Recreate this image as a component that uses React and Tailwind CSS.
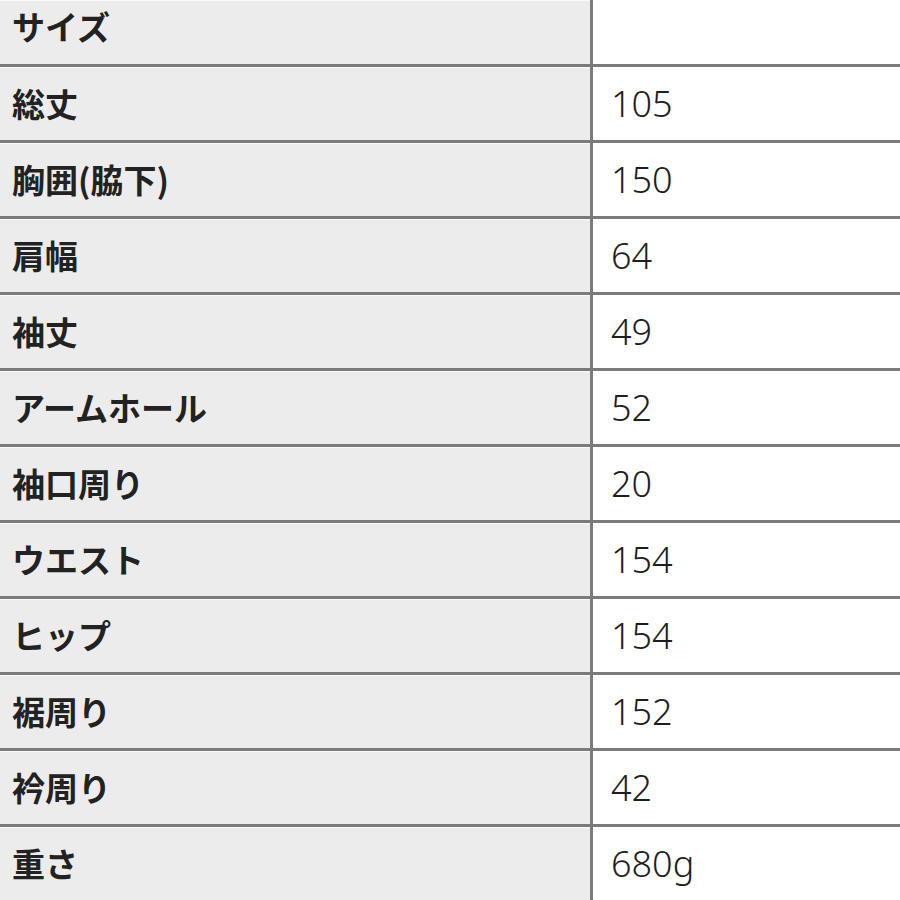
const rows = [
  ["総丈", "105"],
  ["胸囲(脇下)", "150"],
  ["肩幅", "64"],
  ["袖丈", "49"],
  ["アームホール", "52"],
  ["袖口周り", "20"],
  ["ウエスト", "154"],
  ["ヒップ", "154"],
  ["裾周り", "152"],
  ["衿周り", "42"],
  ["重さ", "680g"],
];

const jp = { fontFamily: '"Noto Sans CJK JP", "Noto Sans", sans-serif' };
const num = { fontFamily: '"Noto Sans", "Noto Sans CJK JP", sans-serif' };

function Row({ label, value, first }) {
  return (
    <div className={`flex border-b-[3px] border-[#7b7b7b] ${first ? "h-[67px]" : "h-[76px]"}`}>
      <div
        className={`flex w-[593px] shrink-0 items-center border-r-[3px] border-[#7b7b7b] bg-[#ececec] pl-[12px] text-[33px] font-bold text-[#222] shadow-[inset_0_1px_0_#fafafa] ${first ? "pb-[10px]" : ""}`}
        style={jp}
      >
        {label}
      </div>
      <div className="flex flex-1 items-center bg-white pl-[18px] text-[36px] font-light text-[#1e1e1e]" style={num}>
        {value}
      </div>
    </div>
  );
}

export default function App() {
  return (
    <div className="h-[900px] w-[900px] overflow-hidden bg-white">
      <Row label="サイズ" value="" first />
      {rows.map(([label, value]) => (
        <Row key={label} label={label} value={value} />
      ))}
    </div>
  );
}
